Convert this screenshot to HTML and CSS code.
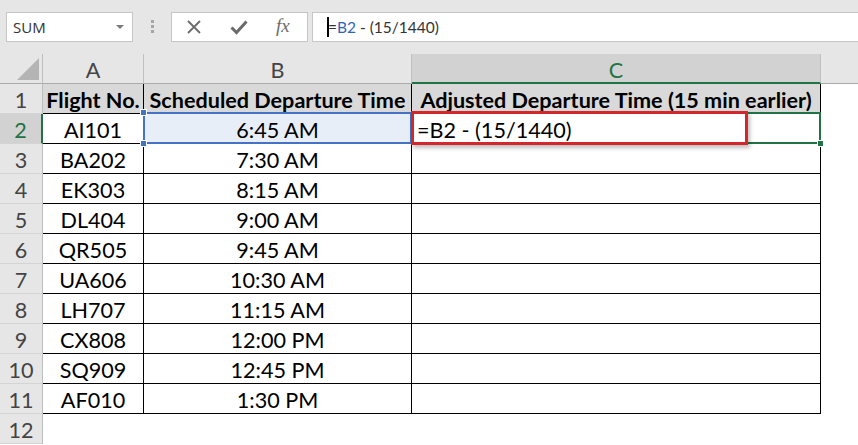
FILE: index.html
```html
<!DOCTYPE html>
<html>
<head>
  <title>Flight departure times</title>
  <link rel="stylesheet" href="styles.css">
</head>
<body>
  <div class="toolbar">
    <div class="name-box">
      <span>SUM</span>
      <svg class="drop" width="8" height="5" viewBox="0 0 8 5"><path d="M0 0 L8 0 L4 4 Z" fill="#7a7a7a"/></svg>
    </div>
    <div class="grip"><i></i><i></i><i></i></div>
    <div class="fx-buttons">
      <svg width="16" height="16" viewBox="0 0 16 16"><path d="M2 2 L14 14 M14 2 L2 14" stroke="#6b6b6b" stroke-width="1.8" fill="none"/></svg>
      <svg width="18" height="16" viewBox="0 0 18 16"><path d="M1.5 8.5 L6.5 13.5 L16.5 2.5" stroke="#6b6b6b" stroke-width="3" fill="none"/></svg>
      <span class="fx">fx</span>
    </div>
    <div class="formula"><span class="caret"></span>=<span class="ref">B2</span> - (15/1440)</div>
  </div>

  <div class="sheet">
    <div class="corner"><span class="tri"></span></div>
    <div class="hd">A</div>
    <div class="hd">B</div>
    <div class="hd on">C</div>
    <div class="hd last"></div>

    <div class="rh">1</div>
    <div class="c t head">Flight No.</div>
    <div class="c t head">Scheduled Departure Time</div>
    <div class="c t head">Adjusted Departure Time (15 min earlier)</div>
    <div class="c"></div>

    <div class="rh on">2</div>
    <div class="c t">AI101</div>
    <div class="c t ref-cell">6:45 AM<span class="knob tl"></span><span class="knob bl"></span></div>
    <div class="c t active"><span class="entry">=B2 - (15/1440)</span><span class="mark"></span><span class="knob br"></span></div>
    <div class="c"></div>

    <div class="rh">3</div>
    <div class="c t">BA202</div>
    <div class="c t">7:30 AM</div>
    <div class="c t"></div>
    <div class="c"></div>

    <div class="rh">4</div>
    <div class="c t">EK303</div>
    <div class="c t">8:15 AM</div>
    <div class="c t"></div>
    <div class="c"></div>

    <div class="rh">5</div>
    <div class="c t">DL404</div>
    <div class="c t">9:00 AM</div>
    <div class="c t"></div>
    <div class="c"></div>

    <div class="rh">6</div>
    <div class="c t">QR505</div>
    <div class="c t">9:45 AM</div>
    <div class="c t"></div>
    <div class="c"></div>

    <div class="rh">7</div>
    <div class="c t">UA606</div>
    <div class="c t">10:30 AM</div>
    <div class="c t"></div>
    <div class="c"></div>

    <div class="rh">8</div>
    <div class="c t">LH707</div>
    <div class="c t">11:15 AM</div>
    <div class="c t"></div>
    <div class="c"></div>

    <div class="rh">9</div>
    <div class="c t">CX808</div>
    <div class="c t">12:00 PM</div>
    <div class="c t"></div>
    <div class="c"></div>

    <div class="rh">10</div>
    <div class="c t">SQ909</div>
    <div class="c t">12:45 PM</div>
    <div class="c t"></div>
    <div class="c"></div>

    <div class="rh">11</div>
    <div class="c t">AF010</div>
    <div class="c t">1:30 PM</div>
    <div class="c t"></div>
    <div class="c"></div>

    <div class="rh">12</div>
    <div class="c"></div>
    <div class="c"></div>
    <div class="c"></div>
    <div class="c"></div>
  </div>
</body>
</html>
```

FILE: styles.css
```css
body {
  margin: 0;
  padding: 0;
  width: 858px;
  height: 445px;
  overflow: hidden;
  background-color: #ffffff;
  font-family: Lato, 'Liberation Sans', sans-serif;
}

.toolbar {
  display: flex;
  align-items: flex-start;
  height: 54px;
  padding: 12px 0 0 6px;
  box-sizing: border-box;
  background-color: #e6e6e6;
}

.name-box,
.fx-buttons,
.formula {
  height: 30px;
  box-sizing: border-box;
  background-color: #ffffff;
  border: 1px solid #c6c6c6;
}

.name-box {
  width: 127px;
  display: flex;
  align-items: center;
  justify-content: space-between;
  padding: 0 8px 0 6px;
  font-family: 'Open Sans', sans-serif;
  font-size: 15px;
  color: #333333;
}

.grip {
  width: 38px;
  display: flex;
  flex-direction: column;
  align-items: center;
  gap: 2px;
  padding-top: 8px;
}

.grip i {
  display: block;
  width: 3px;
  height: 3px;
  background-color: #a6a6a6;
}

.fx-buttons {
  width: 137px;
  display: flex;
  align-items: center;
  gap: 28px;
  padding-left: 14px;
}

.fx {
  font-family: 'Liberation Serif', serif;
  font-style: italic;
  font-size: 19px;
  color: #6b6b6b;
  margin-top: -3px;
}

.formula {
  flex: 1;
  margin-left: 4px;
  margin-right: -2px;
  display: flex;
  align-items: center;
  padding-left: 14px;
  font-size: 15.5px;
  color: #333333;
  white-space: pre;
}

.caret {
  width: 2px;
  height: 20px;
  background-color: #000000;
  margin-right: -1px;
}

.ref {
  color: #2f64b4;
}

.sheet {
  display: grid;
  grid-template-columns: 43px 101px 268px 409px 1fr;
  grid-auto-rows: 30px;
}

.sheet > div {
  box-sizing: border-box;
  display: flex;
  align-items: center;
  justify-content: center;
  font-size: 21.6px;
  white-space: nowrap;
}

.corner {
  background-color: #e6e6e6;
  border-right: 1px solid #c0c0c0;
  border-bottom: 1px solid #ababab;
  position: relative;
}

.tri {
  position: absolute;
  right: 3px;
  bottom: 3px;
  width: 0;
  height: 0;
  border-left: 22px solid transparent;
  border-bottom: 22px solid #b4b4b4;
}

.hd {
  background-color: #e6e6e6;
  color: #444444;
  border-right: 1px solid #c0c0c0;
  border-bottom: 1px solid #ababab;
  padding-top: 2px;
}

.hd.on {
  background-color: #d2d2d2;
  color: #217346;
  border-bottom: 2px solid #217346;
  padding-top: 3px;
}

.hd.last {
  border-right: none;
}

.rh {
  background-color: #e6e6e6;
  color: #444444;
  border-right: 1px solid #bdbdbd;
  border-bottom: 1px solid #d4d4d4;
  padding-top: 2px;
}

.rh.on {
  background-color: #d2d2d2;
  color: #217346;
  border-right: 2px solid #217346;
}

.c {
  color: #000000;
  padding-top: 2px;
}

.t {
  border-right: 1px solid #000000;
  border-bottom: 1px solid #000000;
}

.head {
  background-color: #d9d9d9;
  font-weight: bold;
}

.ref-cell {
  background-color: #e8eef8;
  position: relative;
}

.ref-cell::after {
  content: "";
  position: absolute;
  left: -1px;
  top: -2px;
  right: -1px;
  bottom: -1px;
  border: 2px solid #4472c4;
}

.knob {
  position: absolute;
  width: 5px;
  height: 5px;
  z-index: 2;
}

.ref-cell .knob {
  background-color: #4472c4;
  border: 1px solid #ffffff;
}

.knob.tl {
  left: -4px;
  top: -5px;
}

.knob.bl {
  left: -4px;
  bottom: -4px;
}

.active {
  position: relative;
  justify-content: flex-start !important;
}

.active::after {
  content: "";
  position: absolute;
  left: -1px;
  top: -2px;
  right: -1px;
  bottom: -1px;
  border: 2px solid #217346;
}

.active .knob {
  background-color: #217346;
  border: 1px solid #ffffff;
}

.knob.br {
  right: -4px;
  bottom: -4px;
}

.entry {
  padding-left: 5px;
}

.mark {
  position: absolute;
  left: -1px;
  top: -3px;
  width: 337px;
  height: 34px;
  box-sizing: border-box;
  border: 3px solid #d5262c;
  box-shadow: 2px 3px 4px rgba(0, 0, 0, 0.25);
  z-index: 3;
}
```
